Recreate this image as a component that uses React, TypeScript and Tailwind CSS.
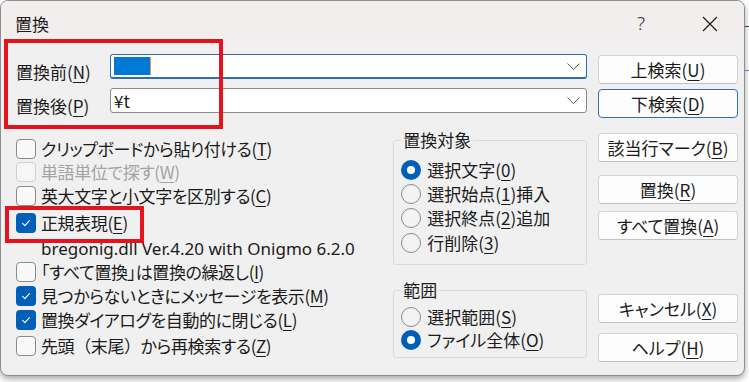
import type { ReactNode } from 'react';

function Key({ k }: { k: string }) {
  return <span className="underline decoration-1 underline-offset-[3px]">{k}</span>;
}

function CheckBox({ checked, disabled }: { checked?: boolean; disabled?: boolean }) {
  if (checked) {
    return (
      <span className="flex h-[20px] w-[20px] shrink-0 items-center justify-center rounded-[4px] bg-[#005fb8]">
        <svg width="12" height="12" viewBox="0 0 12 12">
          <path d="M2.6 6.3l2.3 2.3 4.5-5" fill="none" stroke="white" strokeWidth="1.1" strokeLinecap="round" strokeLinejoin="round" />
        </svg>
      </span>
    );
  }
  return (
    <span
      className={
        disabled
          ? 'h-[20px] w-[20px] shrink-0 rounded-[4px] border border-[#cfcfcf] bg-[#f6f6f6]'
          : 'h-[20px] w-[20px] shrink-0 rounded-[4px] border border-[#8a8a8a] bg-[#f9f9f9]'
      }
    />
  );
}

function Radio({ checked }: { checked?: boolean }) {
  if (checked) {
    return (
      <span className="flex h-[20px] w-[20px] shrink-0 items-center justify-center rounded-full bg-[#005fb8]">
        <span className="h-[8px] w-[8px] rounded-full bg-white" />
      </span>
    );
  }
  return <span className="h-[20px] w-[20px] shrink-0 rounded-full border border-[#8a8a8a] bg-[#f3f3f3]" />;
}

function Chevron() {
  return (
    <svg width="13" height="7" viewBox="0 0 13 7">
      <path d="M0.5 0.5l6 6 6-6" fill="none" stroke="#5c5c5c" strokeWidth="1" />
    </svg>
  );
}

function Button({ children, primary, className }: { children: ReactNode; primary?: boolean; className: string }) {
  return (
    <div
      className={`flex h-[29px] items-center justify-center rounded-[4px] border bg-[#fdfdfd] text-[#1b1b1b] ${
        primary ? 'border-[#2f6fb3]' : 'border-[#d3d3d3] border-b-[#c2c2c2]'
      } ${className}`}
    >
      {children}
    </div>
  );
}

// full-width brackets keep their width, as in the original font
const Wide = ({ c }: { c: string }) => <span className="[font-feature-settings:normal]">{c}</span>;

const options: { text: ReactNode; id: string; k?: string; mt: string; disabled?: boolean; checked?: boolean; note?: boolean }[] = [
  { id: 'paste', text: 'クリップボードから貼り付ける', k: 'T', mt: 'mt-0' },
  { id: 'word', text: '単語単位で探す', k: 'W', mt: '-mt-px', disabled: true },
  { id: 'case', text: '英大文字と小文字を区別する', k: 'C', mt: 'mt-0' },
  { id: 'regex', text: '正規表現', k: 'E', mt: 'mt-[3px]', checked: true },
  { id: 'note', text: 'bregonig.dll Ver.4.20 with Onigmo 6.2.0', mt: 'mt-[2px]', note: true },
  { id: 'repeat', text: '「すべて置換」は置換の繰返し', k: 'I', mt: '-mt-px' },
  { id: 'msg', text: '見つからないときにメッセージを表示', k: 'M', mt: 'mt-0', checked: true },
  { id: 'close', text: '置換ダイアログを自動的に閉じる', k: 'L', mt: 'mt-0', checked: true },
  {
    id: 'wrap',
    text: (
      <>
        先頭<Wide c="（" />末尾<Wide c="）" />から再検索する
      </>
    ),
    k: 'Z',
    mt: 'mt-[2px]',
  },
];

export default function App() {
  return (
    <div className="relative flex h-[382px] w-[749px] items-start overflow-hidden bg-white font-['Noto_Sans_CJK_JP',sans-serif] text-[17px] text-[#1b1b1b] [font-feature-settings:'palt']">
      <div className="flex h-[376px] w-[745px] shrink-0 flex-col overflow-hidden rounded-[8px] border border-[#8e8e8e] bg-[#f0f0f0] shadow-[0_3px_6px_rgba(0,0,0,0.35)]">
        {/* title bar */}
        <div className="flex h-[43px] shrink-0 items-center bg-[#f3eeee] pl-[14px]">
          <span className="flex-1 pt-[3px] text-[17px]">置換</span>
          <span className="flex w-[70px] justify-center pt-[2px] font-['Noto_Sans',sans-serif] text-[19px] font-light text-[#333]">?</span>
          <span className="flex w-[68px] justify-center pt-[2px]">
            <svg width="16" height="16" viewBox="0 0 16 16">
              <path d="M1 1l14 14M15 1L1 15" stroke="#1b1b1b" strokeWidth="1.2" />
            </svg>
          </span>
        </div>

        <div className="flex flex-1 pl-[15px] pr-[6px]">
          {/* left column */}
          <div className="flex w-[571px] flex-col pt-[10px]">
            <div className="flex h-[25px] items-center">
              <span className="mt-[10px] w-[94px] leading-[20px]">
                置換前(<Key k="N" />)
              </span>
              <div className="flex h-[25px] flex-1 items-center justify-between rounded-[3px] border border-[#2c6db3] border-b-2 bg-white pl-[3px] pr-[6px]">
                <div className="flex h-[18px] items-center">
                  <span className="h-[18px] w-[36px] bg-[#0078d4]" />
                  <span className="h-[18px] w-px bg-[#d9a050]" />
                </div>
                <Chevron />
              </div>
            </div>
            <div className="mt-[9px] flex h-[25px] items-center">
              <span className="mt-[10px] w-[94px] leading-[20px]">
                置換後(<Key k="P" />)
              </span>
              <div className="flex h-[25px] flex-1 items-center justify-between rounded-[3px] border border-[#8b8b8b] bg-white pl-[3px] pr-[6px]">
                <span className="leading-[20px]">¥t</span>
                <Chevron />
              </div>
            </div>

            <div className="flex items-start">
              <div className="mt-[24px] flex w-[378px] flex-col">
                {options.map((o) => (
                  <div key={o.id} className={`flex h-[24px] items-center gap-[5px] whitespace-nowrap leading-[24px] ${o.mt}`}>
                    {o.note ? <span className="w-[20px] shrink-0" /> : <CheckBox checked={o.checked} disabled={o.disabled} />}
                    {o.note ? (
                      <span className="font-['Noto_Sans',sans-serif] text-[17px]">{o.text}</span>
                    ) : (
                      <span className={o.disabled ? 'tracking-[-0.4px] text-[#a3a3a3]' : 'tracking-[-0.4px]'}>
                        {o.text}(<Key k={o.k ?? ''} />)
                      </span>
                    )}
                  </div>
                ))}
              </div>

              <div className="mt-[17px] flex w-[194px] flex-col">
                <fieldset className="h-[135px] rounded-[3px] border border-[#dadada] pl-[7px]">
                  <legend className="px-[2px] leading-[20px]">置換対象</legend>
                  <div className="mt-[8px] flex h-[24px] items-center gap-[6px] leading-[24px]">
                    <Radio checked />
                    <span>
                      選択文字(<Key k="0" />)
                    </span>
                  </div>
                  <div className="flex h-[24px] items-center gap-[6px] leading-[24px]">
                    <Radio />
                    <span>
                      選択始点(<Key k="1" />)挿入
                    </span>
                  </div>
                  <div className="flex h-[24px] items-center gap-[6px] leading-[24px]">
                    <Radio />
                    <span>
                      選択終点(<Key k="2" />)追加
                    </span>
                  </div>
                  <div className="mt-px flex h-[24px] items-center gap-[6px] leading-[24px]">
                    <Radio />
                    <span>
                      行削除(<Key k="3" />)
                    </span>
                  </div>
                </fieldset>

                <fieldset className="mt-[15px] h-[78px] rounded-[3px] border border-[#dadada] pl-[7px]">
                  <legend className="px-[2px] leading-[20px]">範囲</legend>
                  <div className="mt-[5px] flex h-[24px] items-center gap-[6px] leading-[24px]">
                    <Radio />
                    <span>
                      選択範囲(<Key k="S" />)
                    </span>
                  </div>
                  <div className="-mt-px flex h-[24px] items-center gap-[6px] leading-[24px]">
                    <Radio checked />
                    <span>
                      ファイル全体(<Key k="O" />)
                    </span>
                  </div>
                </fieldset>
              </div>
            </div>
          </div>

          {/* right column */}
          <div className="ml-[11px] flex w-[141px] flex-col pt-[11px]">
            <Button className="mt-0">
              上検索(<Key k="U" />)
            </Button>
            <Button primary className="mt-[5px]">
              下検索(<Key k="D" />)
            </Button>
            <Button className="mt-[15px]">
              該当行マーク(<Key k="B" />)
            </Button>
            <Button className="mt-[13px]">
              置換(<Key k="R" />)
            </Button>
            <Button className="mt-[7px]">
              すべて置換(<Key k="A" />)
            </Button>
            <Button className="mt-[54px]">
              キャンセル(<Key k="X" />)
            </Button>
            <Button className="mt-[10px]">
              ヘルプ(<Key k="H" />)
            </Button>
          </div>
        </div>
      </div>

      {/* what lies behind the dialog */}
      <div className="flex w-[4px] flex-col">
        <div className="mt-[26px] h-px bg-[#3a3a3a]" />
        <div className="mt-[43px] h-px bg-[#5b7fb8]" />
      </div>

      {/* red annotation frames */}
      <div className="absolute left-[4px] top-[39px] h-[90px] w-[219px] border-[4px] border-[#e3141d]" />
      <div className="absolute left-[5px] top-[206px] h-[37px] w-[139px] border-[4px] border-[#e3141d]" />
    </div>
  );
}
